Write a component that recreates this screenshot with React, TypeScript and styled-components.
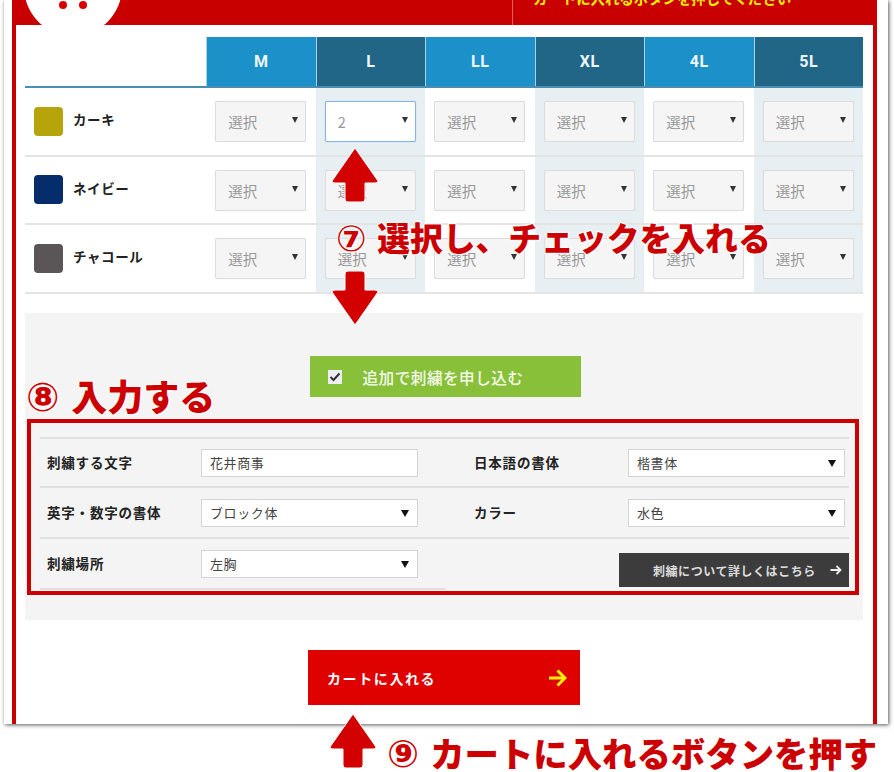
import { FC } from "react";
import styled, { createGlobalStyle } from "styled-components";

const SIZES = ["M", "L", "LL", "XL", "4L", "5L"];

const COLOURS = [
  { name: "カーキ", swatch: "#b5a50a" },
  { name: "ネイビー", swatch: "#052c6b" },
  { name: "チャコール", swatch: "#5a5658" },
];

const Arrow: FC<{ down?: boolean }> = ({ down }) => (
  <svg width="50" height="58" viewBox="0 0 50 58">
    <path
      transform={down ? "rotate(180 25 29)" : undefined}
      d="M25 2 L48 35 Q48 37 45 37 L35 37 L35 53 Q35 56 32 56 L18 56 Q15 56 15 53 L15 37 L5 37 Q2 37 2 35 Z"
      fill="#d30000"
      stroke="#fff"
      strokeWidth="1"
    />
  </svg>
);

const App: FC = () => {
  return (
    <Page>
      <GlobalStyle />
      <Card>
        <Frame>
          <Header>
            <HeaderBadge>
              <BadgeDot />
              <BadgeDot />
            </HeaderBadge>
            <HeaderNote>
              <NoteText>カートに入れるボタンを押してください</NoteText>
            </HeaderNote>
          </Header>
          <Content>
            <SizeTable>
              <HeaderRow>
                <span />
                {SIZES.map((size, i) => (
                  <SizeHead key={size} $dark={i % 2 === 1}>
                    {size}
                  </SizeHead>
                ))}
              </HeaderRow>
              {COLOURS.map((colour, rowIndex) => (
                <ColourRow key={colour.name}>
                  <ColourName>
                    <Swatch $colour={colour.swatch} />
                    {colour.name}
                  </ColourName>
                  {SIZES.map((size, i) => {
                    const active = rowIndex === 0 && size === "L";
                    return (
                      <QtyCell key={size} $tint={i % 2 === 1}>
                        <QtySelect $active={active}>
                          {active ? "2" : "選択"}
                        </QtySelect>
                      </QtyCell>
                    );
                  })}
                </ColourRow>
              ))}
            </SizeTable>

            <OptionPanel>
              <GreenButton>
                <CheckBox>
                  <svg width="12" height="10" viewBox="0 0 12 10">
                    <path
                      d="M1.5 5 L4.5 8 L10.5 1.5"
                      fill="none"
                      stroke="#333"
                      strokeWidth="2"
                    />
                  </svg>
                </CheckBox>
                追加で刺繍を申し込む
              </GreenButton>

              <RedBox>
                <FormGrid>
                  <FormCell>
                    <FieldLabel>刺繍する文字</FieldLabel>
                    <Field>花井商事</Field>
                  </FormCell>
                  <FormCell $right>
                    <FieldLabel>日本語の書体</FieldLabel>
                    <Field $select>楷書体</Field>
                  </FormCell>
                  <FormCell>
                    <FieldLabel>英字・数字の書体</FieldLabel>
                    <Field $select>ブロック体</Field>
                  </FormCell>
                  <FormCell $right>
                    <FieldLabel>カラー</FieldLabel>
                    <Field $select>水色</Field>
                  </FormCell>
                  <FormCell $last>
                    <FieldLabel>刺繍場所</FieldLabel>
                    <Field $select>左胸</Field>
                  </FormCell>
                  <ButtonCell>
                    <DarkButton>
                      刺繍について詳しくはこちら
                      <DarkArrow>
                        <svg width="12" height="10" viewBox="0 0 12 10">
                          <path
                            d="M0.5 5 H10 M6.5 1 L10.5 5 L6.5 9"
                            fill="none"
                            stroke="#eee"
                            strokeWidth="1.8"
                          />
                        </svg>
                      </DarkArrow>
                    </DarkButton>
                  </ButtonCell>
                </FormGrid>
              </RedBox>
            </OptionPanel>

            <CartButton>
              カートに入れる
              <svg width="18" height="18" viewBox="0 0 18 18">
                <path
                  d="M0 9 H15 M8.5 1.5 L16 9 L8.5 16.5"
                  fill="none"
                  stroke="#ffef00"
                  strokeWidth="3"
                />
              </svg>
            </CartButton>
          </Content>
        </Frame>
      </Card>

      <ArrowMark $x={330} $y={146}>
        <Arrow />
      </ArrowMark>
      <ArrowMark $x={330} $y={269}>
        <Arrow down />
      </ArrowMark>
      <ArrowMark $x={328} $y={712}>
        <Arrow />
      </ArrowMark>

      <Callout $x={336} $y={217} $size={32.8}>
        <Circled>⑦</Circled>選択し、チェックを入れる
      </Callout>
      <Callout $x={26} $y={374} $size={36}>
        <Circled>⑧</Circled>入力する
      </Callout>
      <Callout $x={387} $y={732} $size={34.4}>
        <Circled>⑨</Circled>カートに入れるボタンを押す
      </Callout>
    </Page>
  );
};

export default App;

const GlobalStyle = createGlobalStyle`
  html, body {
    margin: 0;
    padding: 0;
    background: #fff;
  }
  body {
    font-family: "Noto Sans CJK JP", "Noto Sans", sans-serif;
  }
`;

const Page = styled.div`
  position: relative;
  width: 894px;
  height: 772px;
  overflow: hidden;
`;

const Card = styled.div`
  width: 884px;
  height: 724px;
  margin-left: 4px;
  padding: 0 11px 0 8px;
  box-sizing: border-box;
  background: #fff;
  box-shadow: 1px 1px 4px rgba(0, 0, 0, 0.65);
`;

const Frame = styled.div`
  height: 100%;
  border-left: 4px solid #c80000;
  border-right: 4px solid #c80000;
  box-sizing: border-box;
`;

const Header = styled.div`
  position: relative;
  height: 25px;
  margin: 0 -4px;
  background: #c80000;
  display: flex;
  justify-content: flex-end;
  overflow: hidden;
`;

const HeaderBadge = styled.div`
  position: absolute;
  left: 12px;
  top: -62px;
  width: 98px;
  height: 98px;
  border-radius: 50%;
  background: #fff;
  display: flex;
  justify-content: center;
  align-items: flex-end;
  gap: 12px;
  padding-bottom: 27px;
  box-sizing: border-box;
`;

const BadgeDot = styled.span`
  width: 8px;
  height: 8px;
  border-radius: 50%;
  background: #d90000;
`;

const HeaderNote = styled.div`
  width: 365px;
  padding-left: 20px;
  box-sizing: border-box;
  border-left: 1px solid #e06060;
`;

const NoteText = styled.div`
  margin-top: -9px;
  color: #ffee00;
  font-size: 14.4px;
  font-weight: 700;
  line-height: 14px;
  white-space: nowrap;
`;

const Content = styled.div`
  padding: 12px 10px 0 9px;
`;

const SizeTable = styled.div`
  margin-bottom: 19.5px;
`;

const HeaderRow = styled.div`
  display: grid;
  grid-template-columns: 181px repeat(6, 1fr);
  height: 51px;
  box-sizing: border-box;
  border-bottom: 2px solid #4a8dae;
`;

const SizeHead = styled.div<{ $dark: boolean }>`
  display: flex;
  align-items: center;
  justify-content: center;
  background: ${(p) => (p.$dark ? "#216587" : "#1b90c9")};
  border-left: 1px solid #a8d2e6;
  color: #eef6fa;
  font-family: "Roboto", sans-serif;
  font-size: 16px;
  font-weight: 700;
  letter-spacing: 0.5px;
`;

const ColourRow = styled.div`
  display: grid;
  grid-template-columns: 181px repeat(6, 1fr);
  height: 68.5px;
  box-sizing: border-box;
  border-bottom: 2px solid #e4e4e4;
`;

const ColourName = styled.div`
  display: flex;
  align-items: center;
  gap: 10px;
  padding: 0 0 4px 9px;
  color: #222;
  font-size: 13.5px;
  font-weight: 700;
  letter-spacing: 0.6px;
`;

const Swatch = styled.span<{ $colour: string }>`
  width: 29px;
  height: 29px;
  margin-top: 4px;
  border-radius: 4px;
  background: ${(p) => p.$colour};
`;

const QtyCell = styled.div<{ $tint: boolean }>`
  display: flex;
  justify-content: center;
  padding-top: 13px;
  background: ${(p) => (p.$tint ? "#e8eff3" : "#fff")};
`;

const QtySelect = styled.div<{ $active: boolean }>`
  position: relative;
  width: 91px;
  height: 41px;
  padding-left: 12px;
  box-sizing: border-box;
  display: flex;
  align-items: center;
  border: 1px solid ${(p) => (p.$active ? "#86b2ee" : "#dcdcdc")};
  border-radius: 2px;
  box-shadow: ${(p) => (p.$active ? "0 0 1px #86b2ee" : "0 0 1px #ddd")};
  background: ${(p) => (p.$active ? "#fff" : "#f5f5f5")};
  color: #999;
  font-size: 14.5px;
  &::after {
    content: "";
    position: absolute;
    right: 7px;
    top: 15px;
    border-left: 3px solid transparent;
    border-right: 3px solid transparent;
    border-top: 6px solid #333;
  }
`;

const OptionPanel = styled.div`
  background: #f4f4f4;
  padding: 43px 4px 25px 2px;
  display: flex;
  flex-direction: column;
  align-items: stretch;
`;

const GreenButton = styled.div`
  align-self: center;
  margin-right: -4px;
  width: 271px;
  height: 41px;
  padding-left: 18px;
  box-sizing: border-box;
  display: flex;
  align-items: center;
  gap: 21px;
  background: #88c03a;
  color: #f7fbee;
  font-size: 15.6px;
  font-weight: 500;
  letter-spacing: 0.5px;
`;

const CheckBox = styled.span`
  width: 14px;
  height: 14px;
  display: flex;
  align-items: center;
  justify-content: center;
  background: #eeeef2;
`;

const RedBox = styled.div`
  margin-top: 22px;
  height: 176px;
  box-sizing: border-box;
  border: 4px solid #cc0000;
  padding: 14px 6px 0 9px;
`;

const FormGrid = styled.div`
  display: grid;
  grid-template-columns: 405px 404px;
  grid-template-rows: 49px 51px 51px;
`;

const FormCell = styled.div<{ $right?: boolean; $last?: boolean }>`
  display: flex;
  align-items: center;
  padding-left: ${(p) => (p.$right ? "29px" : "7px")};
  box-sizing: border-box;
  border-top: 2px solid #e0e0e0;
  ${(p) => p.$last && "border-bottom: 2px solid #e0e0e0; height: 53px;"}
`;

const ButtonCell = styled.div`
  display: flex;
  justify-content: flex-end;
  align-items: flex-end;
  height: 51px;
  border-top: 2px solid #e0e0e0;
  box-sizing: border-box;
`;

const FieldLabel = styled.div`
  width: 154px;
  flex-shrink: 0;
  color: #222;
  font-size: 13.5px;
  font-weight: 700;
  letter-spacing: 0.8px;
  white-space: nowrap;
  position: relative;
  top: -1px;
`;

const Field = styled.div<{ $select?: boolean }>`
  position: relative;
  width: 216.5px;
  height: 28px;
  padding-left: 8px;
  box-sizing: border-box;
  display: flex;
  align-items: center;
  background: #fff;
  border: 1px solid #d4d4d4;
  color: #444;
  font-size: 13px;
  letter-spacing: 0.6px;
  ${(p) =>
    p.$select &&
    `
    &::after {
      content: "";
      position: absolute;
      right: 8px;
      top: 10px;
      border-left: 4px solid transparent;
      border-right: 4px solid transparent;
      border-top: 7px solid #111;
    }
  `}
`;

const DarkButton = styled.div`
  width: 230px;
  height: 34px;
  margin-bottom: 1px;
  padding-left: 34px;
  box-sizing: border-box;
  display: flex;
  align-items: center;
  background: #3c3c3c;
  color: #ddd;
  font-size: 12px;
  font-weight: 700;
  letter-spacing: 0.55px;
  white-space: nowrap;
`;

const DarkArrow = styled.span`
  display: flex;
  margin-left: 14px;
`;

const CartButton = styled.div`
  width: 272px;
  height: 55px;
  margin: 30px auto 0;
  padding: 0 13px 0 19px;
  box-sizing: border-box;
  display: flex;
  align-items: center;
  justify-content: space-between;
  background: #df0000;
  color: #fff;
  font-size: 14px;
  font-weight: 700;
  letter-spacing: 1.6px;
`;

const ArrowMark = styled.div<{ $x: number; $y: number }>`
  position: absolute;
  left: ${(p) => p.$x}px;
  top: ${(p) => p.$y}px;
  line-height: 0;
`;

const Callout = styled.div<{ $x: number; $y: number; $size: number }>`
  position: absolute;
  left: ${(p) => p.$x}px;
  top: ${(p) => p.$y}px;
  color: #cc0000;
  font-size: ${(p) => p.$size}px;
  font-weight: 900;
  line-height: 1.2;
  white-space: nowrap;
  -webkit-text-stroke: 2px #fff;
  paint-order: stroke fill;
`;

const Circled = styled.span`
  display: inline-block;
  width: 1.14em;
  font-family: "DejaVu Sans", sans-serif;
  font-size: 1.1em;
  line-height: 1;
  font-weight: 700;
`;
